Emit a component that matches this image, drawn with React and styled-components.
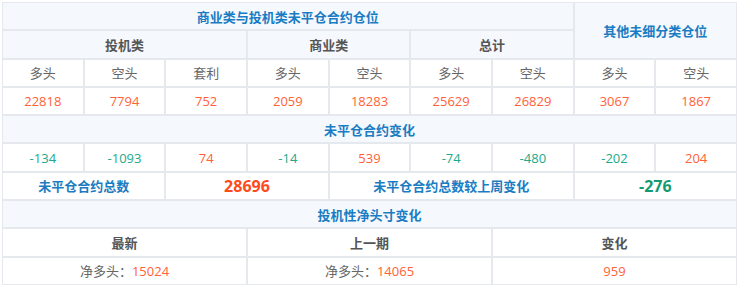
import React from "react";
import styled, { createGlobalStyle } from "styled-components";

const GlobalStyle = createGlobalStyle`
  body {
    margin: 0;
    background: #fff;
    font-family: "Open Sans", "Noto Sans CJK SC", sans-serif;
  }
`;

const Wrap = styled.div`
  padding: 2px 3px 2px 2px;
`;

const Grid = styled.div`
  display: grid;
  grid-template-columns: repeat(9, 1fr);
  grid-auto-rows: 26.3px;
  gap: 2px;
  padding: 1px;
  background: #e5e9ee;
`;

const Cell = styled.div`
  display: flex;
  align-items: center;
  justify-content: center;
  grid-column: span ${(p) => p.$span || 1};
  grid-row: span ${(p) => p.$rows || 1};
  background: ${(p) => (p.$shade ? "#f5f9fe" : "#fff")};
  font-size: ${(p) => (p.$big ? "16px" : "13px")};
  font-weight: ${(p) => (p.$bold ? 700 : 400)};
  color: ${(p) =>
    ({
      title: "#1a7cc3",
      head: "#555",
      label: "#666",
      up: "#ff6236",
      down: "#22a98c",
      bigUp: "#ff4a1c",
      bigDown: "#139a70",
    })[p.$tone || "label"]};
  white-space: nowrap;
`;

const Num = styled.span`
  color: #ff6236;
`;

const positions = [22818, 7794, 752, 2059, 18283, 25629, 26829, 3067, 1867];
const changes = [-134, -1093, 74, -14, 539, -74, -480, -202, 204];
const sides = ["多头", "空头", "套利", "多头", "空头", "多头", "空头", "多头", "空头"];

export default function App() {
  return (
    <Wrap>
      <GlobalStyle />
      <Grid>
        <Cell $span={7} $shade $bold $tone="title">
          商业类与投机类未平仓合约仓位
        </Cell>
        <Cell $span={2} $rows={2} $shade $bold $tone="title">
          其他未细分类仓位
        </Cell>
        <Cell $span={3} $shade $bold $tone="head">投机类</Cell>
        <Cell $span={2} $shade $bold $tone="head">商业类</Cell>
        <Cell $span={2} $shade $bold $tone="head">总计</Cell>

        {sides.map((s, i) => (
          <Cell key={"s" + i}>{s}</Cell>
        ))}
        {positions.map((n, i) => (
          <Cell key={"p" + i} $tone="up">{n}</Cell>
        ))}

        <Cell $span={9} $shade $bold $tone="title">未平仓合约变化</Cell>
        {changes.map((n, i) => (
          <Cell key={"c" + i} $tone={n < 0 ? "down" : "up"}>{n}</Cell>
        ))}

        <Cell $span={2} $bold $tone="title">未平仓合约总数</Cell>
        <Cell $span={2} $bold $big $tone="bigUp">28696</Cell>
        <Cell $span={3} $bold $tone="title">未平仓合约总数较上周变化</Cell>
        <Cell $span={2} $bold $big $tone="bigDown">-276</Cell>

        <Cell $span={9} $shade $bold $tone="title">投机性净头寸变化</Cell>
        <Cell $span={3} $bold $tone="head">最新</Cell>
        <Cell $span={3} $bold $tone="head">上一期</Cell>
        <Cell $span={3} $bold $tone="head">变化</Cell>
        <Cell $span={3}>净多头：<Num>15024</Num></Cell>
        <Cell $span={3}>净多头：<Num>14065</Num></Cell>
        <Cell $span={3} $tone="up">959</Cell>
      </Grid>
    </Wrap>
  );
}
